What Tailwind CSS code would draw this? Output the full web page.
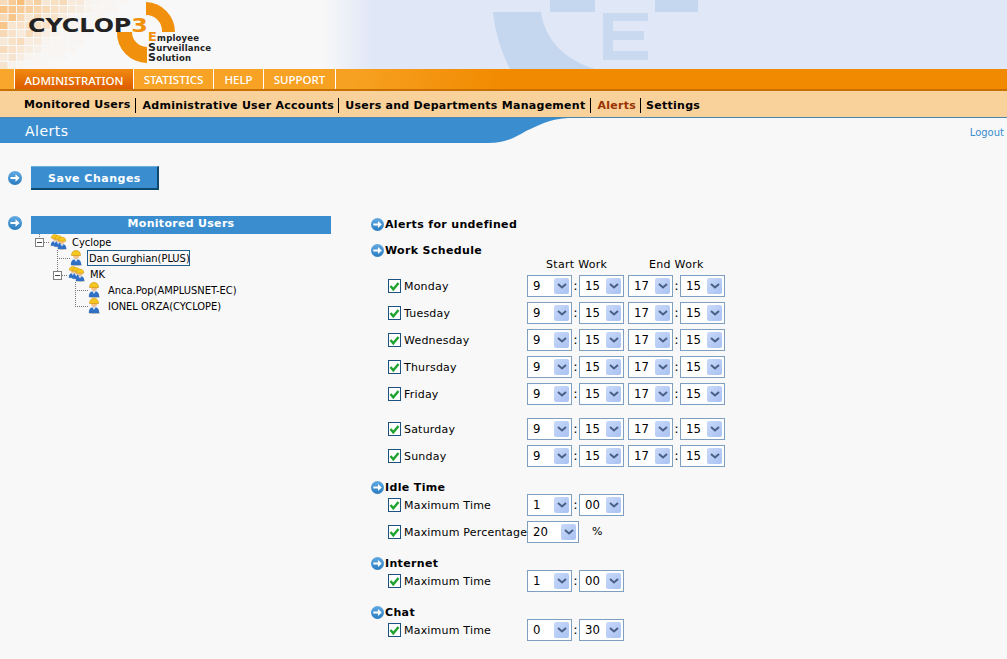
<!DOCTYPE html>
<html lang="en">
<head>
  <meta charset="UTF-8" />
  <title>Cyclope - Alerts</title>
  <script src="https://cdn.jsdelivr.net/npm/@tailwindcss/browser@4"></script>
</head>
<body class="bg-[#f8f8f8] text-black font-['DejaVu_Sans',sans-serif] text-[11px] overflow-hidden">

  <svg class="absolute w-0 h-0">
    <defs>
      <linearGradient id="ballFill" x1="0" y1="0" x2="0" y2="1"><stop offset="0" stop-color="#62abe3"/><stop offset="1" stop-color="#2a7cc0"/></linearGradient>
      <symbol id="ball" viewBox="0 0 14 14">
        <circle cx="7" cy="7" r="7" fill="url(#ballFill)"/>
        <path d="M2.500 6h5V3.300L11.600 7 7.500 10.700V8h-5z" fill="#fff"/>
      </symbol>
      <symbol id="chev" viewBox="0 0 10 6">
        <path d="M1 1l4 3.500L9 1" fill="none" stroke="#4a5f85" stroke-width="2"/>
      </symbol>
      <symbol id="tick" viewBox="0 0 11 11">
        <path d="M1.500 5l2.800 3.300L9.500 2" fill="none" stroke="#1fa32e" stroke-width="2.400"/>
      </symbol>
      <symbol id="person" viewBox="0 0 12 16">
        <ellipse cx="6.500" cy="15" rx="5.500" ry="1" fill="#b8b8b8"/>
        <path d="M.8 15c0-4 1.900-6 5.200-6s5.200 2 5.200 6z" fill="#2f6fc4"/>
        <path d="M4 9h4L6 12z" fill="#cfe0f5"/>
        <circle cx="6.200" cy="6" r="3" fill="#f2c08a"/>
        <path d="M1.500 5.500C1.500 2 3.500 .5 6 .5s4.500 1.500 4.500 5H7z" fill="#f6c81e" stroke="#c98f0c" stroke-width=".6"/>
      </symbol>
      <symbol id="group" viewBox="0 0 17 16">
        <use href="#person" x="0" y="0" width="9.500" height="12.500"/>
        <use href="#person" x="3.500" y="1" width="9.500" height="12.500"/>
        <use href="#person" x="7" y="2.500" width="10" height="13.500"/>
      </symbol>
    </defs>
  </svg>

  <!-- header -->
  <header class="relative h-[69px] overflow-hidden bg-gradient-to-r from-[#f8f8f8] from-[32%] to-[#e0e7f6] to-[37%]">
    <svg id="mosaic" class="absolute left-0 top-0" width="130" height="69"></svg>
    <svg class="absolute left-0 top-0" width="1007" height="69">
      <path d="M493 12H541C545 40 565 60 595 69H510C500 50 495 30 493 12z" fill="#c5d7ef"/>
      <path d="M550 0h45v12h-45z" fill="#c5d7ef"/>
      <path d="M603 13h45v8h-35v10h31v9h-31v11h35v9h-45z" fill="#c9daf0"/>
      <path d="M655 0h43v12h-43z" fill="#c5d7ef"/>
      <path d="M146 2a30 30 0 0 1 29 30h-13a16 16 0 0 0-16-17z" fill="#f0900c"/>
      <path d="M117 32h15a15 15 0 0 0 15 15v16a30 30 0 0 1-30-31z" fill="#f0900c"/>
    </svg>
    <div class="absolute left-[28px] top-[13px] flex items-baseline font-bold text-[20px] leading-[24px] text-[#222] scale-x-[1.19] origin-left">CYCLOP<span class="text-[#f0900c]">3</span></div>
    <div class="absolute left-[148px] top-[32px] font-bold text-[8.500px] leading-[10px] tracking-[0.2px] text-[#222]">
      <div><span class="text-[13px] leading-[10px] text-[#f0900c]">E</span>mployee</div>
      <div><span class="text-[11px] leading-[10px]">S</span>urveillance</div>
      <div><span class="text-[11px] leading-[10px]">S</span>olution</div>
    </div>
  </header>

  <!-- main menu -->
  <nav class="h-[22px] flex pl-[14px] border-b-2 border-[#c87000] bg-[linear-gradient(100deg,#f9a62c_0%,#f7a122_35%,#f18a00_50%)] font-['Noto_Sans',sans-serif] font-medium text-[11.500px] text-white">
    <a class="w-[120px] pt-[3px] flex items-center justify-center border-x border-[#fff] bg-gradient-to-b from-[#f08a10] to-[#de5c00]">ADMINISTRATION</a>
    <a class="w-[80px] pt-[2px] flex items-center justify-center border-r border-[#fff]">STATISTICS</a>
    <a class="w-[50px] pt-[2px] flex items-center justify-center border-r border-[#fff]">HELP</a>
    <a class="w-[72px] pt-[2px] flex items-center justify-center border-r border-[#fff]">SUPPORT</a>
  </nav>

  <!-- sub menu -->
  <div class="h-[27px] flex items-center pl-[24px] pt-[2px] bg-[#f9d19b] border-b border-[#4a86b0] font-bold text-[11px] tracking-[0.27px]">
    <a class="pr-[5px]">Monitored Users</a>
    <a class="pl-[6px] pr-[4px] border-l border-black leading-[15px]">Administrative User Accounts</a>
    <a class="pl-[6px] pr-[5px] border-l border-black leading-[15px]">Users and Departments Management</a>
    <a class="pl-[6px] pr-[4px] border-l border-black leading-[15px] text-[#993300]">Alerts</a>
    <a class="pl-[5px] pr-[5px] border-l border-black leading-[15px]">Settings</a>
  </div>

  <!-- page title -->
  <div class="relative h-[25px] flex items-center justify-between">
    <svg class="absolute left-0 top-0" width="570" height="25"><path d="M0 0H568C548 1 538 8 526 13C514 20 505 25 488 25H0z" fill="#3a8ed0"/></svg>
    <h1 class="relative pl-[25px] pt-[2px] text-[14px] tracking-[0.5px] text-white">Alerts</h1>
    <a class="relative pt-[3px] pr-[3px] text-[10px] text-[#3a8ed0]">Logout</a>
  </div>

  <!-- save -->
  <div class="flex items-center mt-[23px] pl-[8px] gap-[9px]">
    <svg width="14" height="14"><use href="#ball"/></svg>
    <button class="w-[128px] h-[24px] pt-[4px] pl-[1px] bg-[#3a8ed0] border-t border-t-[#6aaee0] border-r-2 border-b-2 border-r-[#0e4a70] border-b-[#0e4a70] text-white font-bold text-[11px] tracking-[0.5px]">Save Changes</button>
  </div>

  <main class="flex mt-[26px]">
    <!-- users tree -->
    <section class="w-[371px] shrink-0 pl-[8px]">
      <div class="flex gap-[9px]">
        <svg class="shrink-0" width="14" height="14"><use href="#ball"/></svg>
        <div class="w-[300px] h-[18px] bg-[#3a8ed0] text-white font-bold text-[11px] tracking-[0.3px] text-center leading-[16px]">Monitored Users</div>
      </div>
      <div class="relative font-['DejaVu_Sans_Condensed','Liberation_Sans',sans-serif] text-[11px] whitespace-nowrap ml-[27px] h-[90px]">
        <svg class="absolute left-0 top-0" width="100" height="90">
          <path d="M4.500 0v5M9 8.500h6M22.500 16v21M22 24.500h13M27 41.500h6M40.500 48v24M40 56.500h13M40 72.500h13" fill="none" stroke="#777" stroke-dasharray="1 1"/>
          <rect x=".5" y="4.500" width="8" height="8" fill="#fff" stroke="#808080"/><path d="M2 8.500h5" stroke="#444"/>
          <rect x="18.500" y="37.500" width="8" height="8" fill="#fff" stroke="#808080"/><path d="M20 41.500h5" stroke="#444"/>
        </svg>
        <div class="relative flex flex-col">
          <div class="flex items-center h-[16px] pl-[15px] gap-[5px]"><svg width="17" height="16"><use href="#group"/></svg><span class="pt-[2px]">Cyclope</span></div>
          <div class="flex items-center h-[16px] pl-[35px] gap-[5px]"><svg width="12" height="16"><use href="#person"/></svg><span class="border border-[#1c5f8c] px-[1px] w-[103px] h-[16px] leading-[15px]">Dan Gurghian(PLUS)</span></div>
          <div class="flex items-center h-[16px] pl-[33px] gap-[5px]"><svg width="17" height="16"><use href="#group"/></svg><span class="pt-[2px]">MK</span></div>
          <div class="flex items-center h-[16px] pl-[53px] gap-[8px]"><svg width="12" height="16"><use href="#person"/></svg><span class="pt-[2px]">Anca.Pop(AMPLUSNET-EC)</span></div>
          <div class="flex items-center h-[16px] pl-[53px] gap-[8px]"><svg width="12" height="16"><use href="#person"/></svg><span class="pt-[2px]">IONEL ORZA(CYCLOPE)</span></div>
        </div>
      </div>
    </section>

    <!-- alerts form -->
    <section id="form" class="flex-1 pt-[1px]"></section>
  </main>

  <script>
    function sel(value, wide) {
      return `<div class="relative ${wide ? 'w-[52px]' : 'w-[45px]'} h-[22px] shrink-0 border border-[#7f9fc0] bg-white">
        <select class="appearance-none w-full h-full pl-[5px] text-[13px] font-['DejaVu_Sans_Condensed','Liberation_Sans',sans-serif] bg-transparent"><option>${value}</option></select>
        <span class="absolute right-[2px] top-[2px] w-[15px] h-[16px] flex items-center justify-center rounded-[2px] bg-gradient-to-br from-[#c9d9f9] to-[#a9c2f2]"><svg width="10" height="6"><use href="#chev"/></svg></span>
      </div>`;
    }
    const colon = `<span class="w-[7px] text-center text-[13px] shrink-0">:</span>`;

    function label(text) {
      return `<div class="flex items-center w-[156px] shrink-0 pl-[17px]">
        <span class="w-[13px] h-[14px] shrink-0 border border-[#1c5180] bg-white flex items-center justify-center"><svg width="11" height="11"><use href="#tick"/></svg></span>
        <span class="pl-[3px] pt-[2px] whitespace-nowrap tracking-[0.2px]">${text}</span>
      </div>`;
    }
    const head = (text, cls) => `<div class="flex items-center gap-[1px] h-[14px] ${cls}"><svg width="13" height="13"><use href="#ball"/></svg><b class="pt-[2px] text-[11px] tracking-[0.35px]">${text}</b></div>`;
    const day = (name, cls) => `<div class="flex items-center h-[22px] ${cls}">${label(name)}${sel(9)}${colon}${sel(15)}<span class="w-[4px]"></span>${sel(17)}${colon}${sel(15)}</div>`;
    const maxTime = (h, m) => `<div class="flex items-center h-[22px]">${label('Maximum Time')}${sel(h)}${colon}${sel(m)}</div>`;

    document.getElementById('form').innerHTML =
      head('Alerts for undefined', '') +
      head('Work Schedule', 'mt-[12px]') +
      `<div class="flex h-[14px] pl-[156px] tracking-[0.3px]"><span class="w-[99px] pl-[19px]">Start Work</span><span class="pl-[23px]">End Work</span></div>` +
      day('Monday', 'mt-[4px]') + day('Tuesday', 'mt-[5px]') + day('Wednesday', 'mt-[5px]') +
      day('Thursday', 'mt-[5px]') + day('Friday', 'mt-[5px]') + day('Saturday', 'mt-[13px]') + day('Sunday', 'mt-[5px]') +
      head('Idle Time', 'mt-[13px]') +
      maxTime(1, '00') +
      `<div class="flex items-center h-[22px] mt-[5px]">${label('Maximum Percentage')}${sel(20, true)}<span class="pl-[13px]">%</span></div>` +
      head('Internet', 'mt-[13px]') + maxTime(1, '00') +
      head('Chat', 'mt-[13px]') + maxTime(0, 30);

    // background mosaic in the logo corner
    const mosaic = document.getElementById('mosaic');
    let parts = '';
    for (let y = 0; y < 9; y++) {
      for (let x = 0; x < 15; x++) {
        const fade = 1 - (x / 12 + y / 11);
        const noise = ((x * 7 + y * 13 + x * y * 3) % 5) / 5;
        const a = Math.max(0.04, fade) * (0.35 + noise * 0.65);
        if (fade > -0.25) parts += `<rect x="${x * 8.5}" y="${y * 8 - 2}" width="7.500" height="7" fill="#f7a84a" fill-opacity="${a.toFixed(2)}"/>`;
      }
    }
    mosaic.innerHTML = parts;
  </script>
</body>
</html>
